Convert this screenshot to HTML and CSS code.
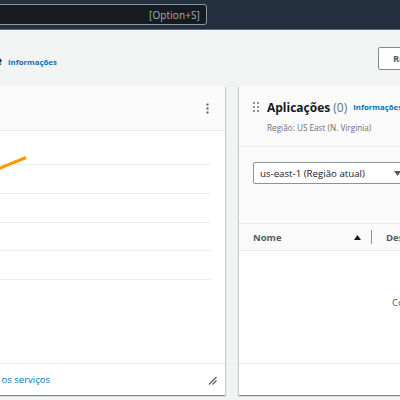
FILE: index.html
```html
<!DOCTYPE html>
<html lang="pt-BR">
<head>
<meta charset="utf-8">
<title>Console</title>
<link rel="stylesheet" href="styles.css">
</head>
<body>
<nav class="topnav">
  <div class="search"><span class="shortcut">[Option+S]</span></div>
</nav>
<main class="page">
  <header class="page-header">
    <div class="title-wrap">
      <div class="title-crop"><h1>Página inicial do console</h1></div>
      <a class="info" href="#">Informações</a>
    </div>
    <button class="reset" type="button">Redefinir para o layout padrão</button>
  </header>
  <div class="board">
    <section class="card">
      <div class="card-head">
        <svg class="kebab" width="3" height="11" viewBox="0 0 3 11"><rect x="0.5" y="0.5" width="2" height="2" fill="#545b64"/><rect x="0.5" y="4.5" width="2" height="2" fill="#545b64"/><rect x="0.5" y="8.5" width="2" height="2" fill="#545b64"/></svg>
      </div>
      <div class="chart">
        <svg width="223" height="232" viewBox="0 0 223 232">
          <g stroke="#eaeded" stroke-width="1">
            <line x1="0" y1="33.5" x2="223" y2="33.5"/>
            <line x1="0" y1="62.5" x2="223" y2="62.5"/>
            <line x1="0" y1="91.5" x2="223" y2="91.5"/>
            <line x1="0" y1="119.5" x2="223" y2="119.5"/>
            <line x1="0" y1="148.5" x2="223" y2="148.5"/>
          </g>
          <polyline points="0,42 38,26.5" fill="none" stroke="#ff9900" stroke-width="3"/>
        </svg>
      </div>
      <div class="card-foot">
        <div class="link-crop"><a class="foot-link" href="#">Visualizar todos os serviços</a></div>
        <svg class="resize" width="9" height="9" viewBox="0 0 9 9"><path d="M1 8.5 L8.5 1 M4.5 8.5 L8.5 4.5" stroke="#545b64" stroke-width="1.2" fill="none"/></svg>
      </div>
    </section>
    <section class="card">
      <div class="app-head">
        <div class="title-row">
          <svg class="handle" width="7" height="11" viewBox="0 0 7 11"><g fill="#879596"><rect x="0" y="0" width="2" height="2"/><rect x="4" y="0" width="2" height="2"/><rect x="0" y="4" width="2" height="2"/><rect x="4" y="4" width="2" height="2"/><rect x="0" y="8" width="2" height="2"/><rect x="4" y="8" width="2" height="2"/></g></svg>
          <h2>Aplicações</h2>
          <span class="count">(0)</span>
          <a class="info" href="#">Informações</a>
        </div>
        <p class="sub">Região: US East (N. Virginia)</p>
      </div>
      <div class="select-zone">
        <div class="select">
          <span>us-east-1 (Região atual)</span>
          <svg class="caret" width="7" height="5" viewBox="0 0 7 5"><path d="M0 0 H7 L3.5 5 Z" fill="#545b64"/></svg>
        </div>
      </div>
      <div class="thead">
        <div class="th th-name">
          <span>Nome</span>
          <svg width="7" height="5" viewBox="0 0 7 5"><path d="M0 5 H7 L3.5 0 Z" fill="#16191f"/></svg>
        </div>
        <div class="th-divider"></div>
        <div class="th">Descrição</div>
      </div>
      <div class="tbody">
        <p class="empty">Comece criando uma aplicação</p>
      </div>
      <div class="card-foot"></div>
    </section>
  </div>
</main>
</body>
</html>
```
FILE: styles.css
```css
html, body {
  margin: 0;
  overflow: hidden;
}
body {
  width: 400px;
  height: 400px;
  background: #f2f3f3;
  font-family: "Open Sans", "Noto Sans", sans-serif;
  color: #16191f;
}
.topnav {
  box-sizing: border-box;
  height: 30px;
  padding-top: 4px;
  background: #232f3e;
  border-bottom: 1px solid #5f6b7a;
}
.search {
  box-sizing: border-box;
  width: 217px;
  height: 21px;
  margin-left: -10px;
  background: #161b22;
  border: 1px solid #8d99a8;
  border-radius: 3px;
  display: flex;
  align-items: center;
  justify-content: flex-end;
  padding-right: 6px;
}
.shortcut {
  font-size: 10px;
  color: #a7b0ba;
  letter-spacing: 0.1px;
}
.page-header {
  height: 56px;
  display: grid;
  grid-template-columns: 370px max-content;
  column-gap: 8px;
  align-items: center;
}
.title-wrap {
  display: flex;
  align-items: baseline;
  gap: 6px;
  padding-top: 3px;
}
.title-crop {
  width: 2px;
  overflow: hidden;
  display: flex;
  justify-content: flex-end;
}
.title-crop h1 {
  margin: 0;
  font-size: 13px;
  font-weight: 700;
  white-space: nowrap;
}
.info {
  font-size: 7.8px;
  font-weight: 700;
  color: #0073bb;
  text-decoration: none;
  white-space: nowrap;
}
.reset {
  box-sizing: border-box;
  height: 23px;
  padding: 0 14px;
  background: #fff;
  border: 1px solid #7d8998;
  border-radius: 2px;
  font-family: inherit;
  font-size: 9.5px;
  font-weight: 700;
  color: #545b64;
  white-space: nowrap;
}
.board {
  display: grid;
  grid-template-columns: 237px 320px;
  column-gap: 14px;
  margin-left: -12px;
}
.card {
  height: 309px;
  background: #fff;
  display: flex;
  flex-direction: column;
  box-shadow: 0 1px 1px 0 rgba(0, 28, 36, 0.3), 1px 1px 1px 0 rgba(0, 28, 36, 0.15), -1px 1px 1px 0 rgba(0, 28, 36, 0.15);
}
.card-head {
  height: 44px;
  flex: none;
  background: #fafafa;
  border-bottom: 1px solid #eaeded;
  display: flex;
  align-items: center;
  justify-content: flex-end;
  padding-right: 16px;
}
.kebab {
  display: block;
  margin-top: 1px;
}
.chart {
  height: 232px;
  flex: none;
}
.chart svg {
  display: block;
}
.card-foot {
  height: 31px;
  flex: none;
  border-top: 1px solid #eaeded;
  display: flex;
  align-items: center;
  justify-content: space-between;
  padding-right: 8px;
}
.link-crop {
  width: 62px;
  overflow: hidden;
  display: flex;
  justify-content: flex-end;
}
.foot-link {
  font-size: 9.5px;
  color: #0073bb;
  text-decoration: none;
  white-space: nowrap;
}
.resize {
  display: block;
  margin-top: 2px;
}
.app-head {
  box-sizing: border-box;
  height: 61px;
  flex: none;
  background: #fafafa;
  border-bottom: 1px solid #eaeded;
  padding: 13px 14px 0;
}
.title-row {
  height: 16px;
  display: flex;
  align-items: center;
  white-space: nowrap;
}
.handle {
  display: block;
  margin-right: 7px;
}
.title-row h2 {
  margin: 0;
  font-size: 12px;
  font-weight: 700;
  color: #16191f;
}
.count {
  font-size: 12px;
  color: #687078;
  margin-left: 3px;
}
.title-row .info {
  margin-left: 6px;
}
.sub {
  margin: 8px 0 0 14px;
  font-size: 8.2px;
  line-height: 10px;
  color: #687078;
  white-space: nowrap;
}
.select-zone {
  box-sizing: border-box;
  height: 76px;
  flex: none;
  background: #fafafa;
  padding: 15px 14px 0;
}
.select {
  box-sizing: border-box;
  width: 152px;
  height: 22px;
  background: #fff;
  border: 1px solid #879596;
  border-radius: 2px;
  display: flex;
  align-items: center;
  justify-content: space-between;
  padding: 0 3px 0 6px;
  font-size: 9.7px;
  color: #16191f;
  white-space: nowrap;
}
.caret {
  display: block;
}
.thead {
  box-sizing: border-box;
  height: 28px;
  flex: none;
  background: #fafafa;
  border-top: 1px solid #eaeded;
  border-bottom: 1px solid #eaeded;
  display: flex;
  align-items: center;
  padding-left: 14px;
  font-size: 9.5px;
  font-weight: 700;
  color: #545b64;
  white-space: nowrap;
}
.th-name {
  width: 118px;
  box-sizing: border-box;
  padding-right: 10px;
  display: flex;
  align-items: center;
  justify-content: space-between;
}
.th-name svg {
  display: block;
}
.th-divider {
  width: 1px;
  height: 14px;
  background: #879596;
  margin-right: 14px;
}
.tbody {
  height: 112px;
  flex: none;
}
.empty {
  margin: 0;
  padding: 46px 0 0 153px;
  font-size: 9.5px;
  line-height: 12px;
  color: #545b64;
  white-space: nowrap;
}
```
